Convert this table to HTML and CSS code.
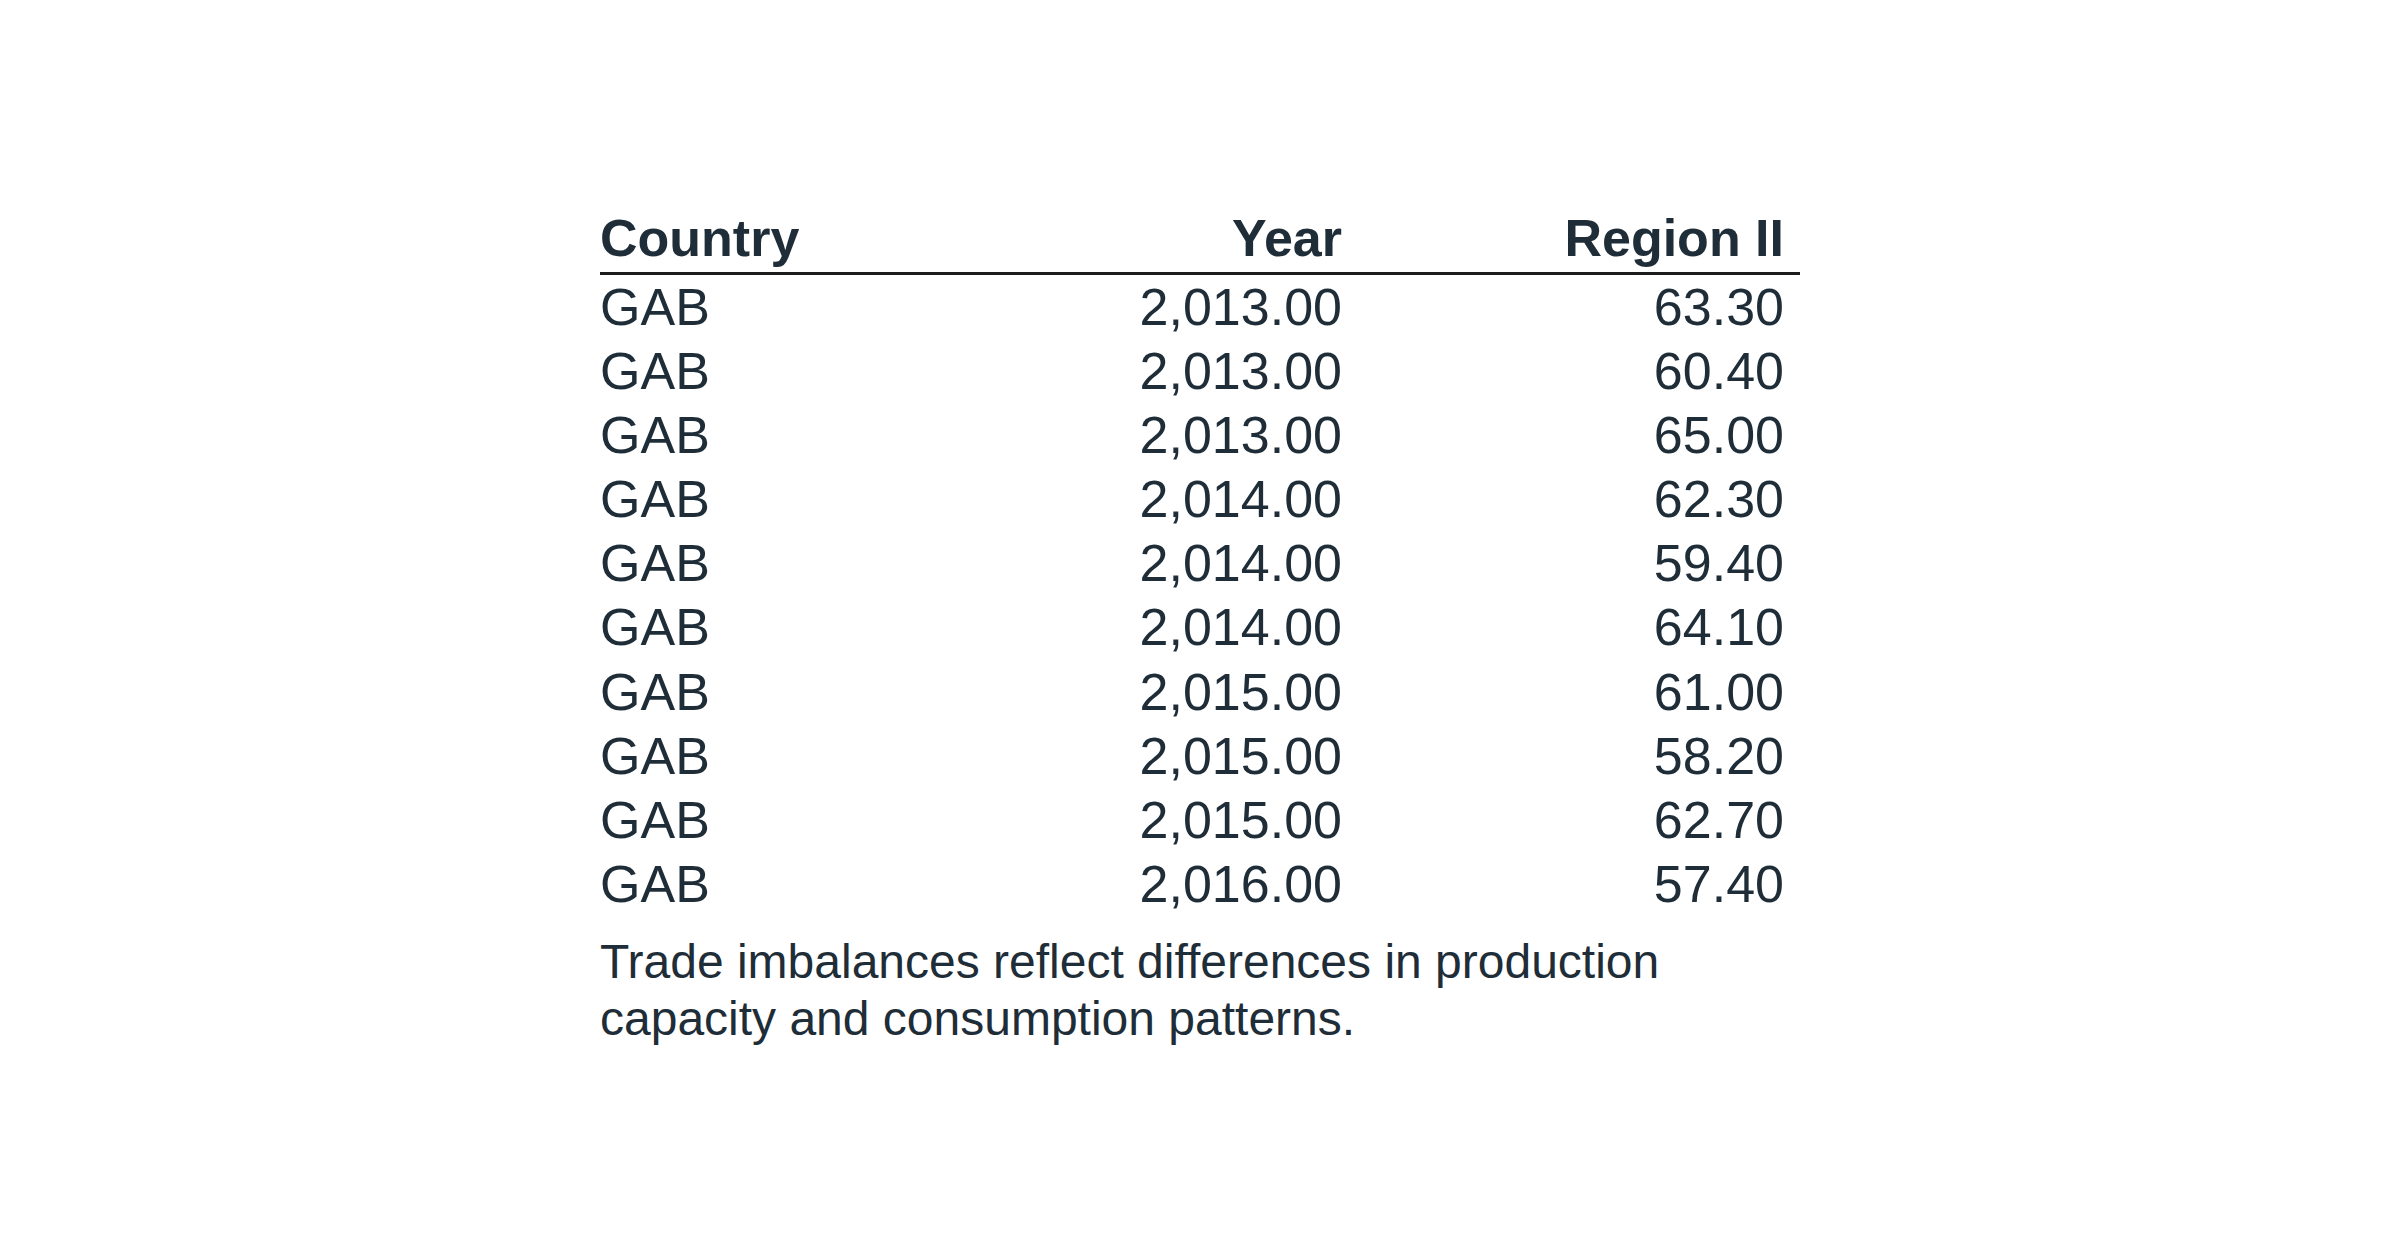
FILE: index.html
```html
<!DOCTYPE html>
<html lang="en">
<head>
<meta charset="utf-8">
<title>Region II</title>
<link rel="stylesheet" href="styles.css">
</head>
<body>
<main class="page">
  <section class="report">
    <div class="table">
      <div class="row head">
        <div class="cell">Country</div>
        <div class="cell num">Year</div>
        <div class="cell num">Region II</div>
      </div>
      <div class="row"><div class="cell">GAB</div><div class="cell num">2,013.00</div><div class="cell num">63.30</div></div>
      <div class="row"><div class="cell">GAB</div><div class="cell num">2,013.00</div><div class="cell num">60.40</div></div>
      <div class="row"><div class="cell">GAB</div><div class="cell num">2,013.00</div><div class="cell num">65.00</div></div>
      <div class="row"><div class="cell">GAB</div><div class="cell num">2,014.00</div><div class="cell num">62.30</div></div>
      <div class="row"><div class="cell">GAB</div><div class="cell num">2,014.00</div><div class="cell num">59.40</div></div>
      <div class="row"><div class="cell">GAB</div><div class="cell num">2,014.00</div><div class="cell num">64.10</div></div>
      <div class="row"><div class="cell">GAB</div><div class="cell num">2,015.00</div><div class="cell num">61.00</div></div>
      <div class="row"><div class="cell">GAB</div><div class="cell num">2,015.00</div><div class="cell num">58.20</div></div>
      <div class="row"><div class="cell">GAB</div><div class="cell num">2,015.00</div><div class="cell num">62.70</div></div>
      <div class="row"><div class="cell">GAB</div><div class="cell num">2,016.00</div><div class="cell num">57.40</div></div>
    </div>
    <p class="caption">Trade imbalances reflect differences in production capacity and consumption patterns.</p>
  </section>
</main>
</body>
</html>
```

FILE: styles.css
```css
html, body {
  margin: 0;
  padding: 0;
  background: #ffffff;
}

body {
  font-family: "Liberation Sans", Arial, sans-serif;
  color: #1e2d37;
}

.page {
  width: 2400px;
  height: 1256px;
  display: flex;
  justify-content: center;
  padding-top: 208px;
  box-sizing: border-box;
}

.report {
  width: 1200px;
}

.table {
  display: flex;
  flex-direction: column;
}

.row {
  display: grid;
  grid-template-columns: 400px 358px 442px;
  font-size: 52px;
  line-height: 64.1px;
}

.row.head {
  font-weight: 700;
  line-height: 61px;
  padding-bottom: 3px;
  border-bottom: 3px solid #1c1c1c;
}

.cell {
  padding-right: 16px;
  white-space: nowrap;
}

.cell.num {
  text-align: right;
}

.caption {
  margin: 17px 0 0;
  font-size: 48px;
  line-height: 57px;
}
```
